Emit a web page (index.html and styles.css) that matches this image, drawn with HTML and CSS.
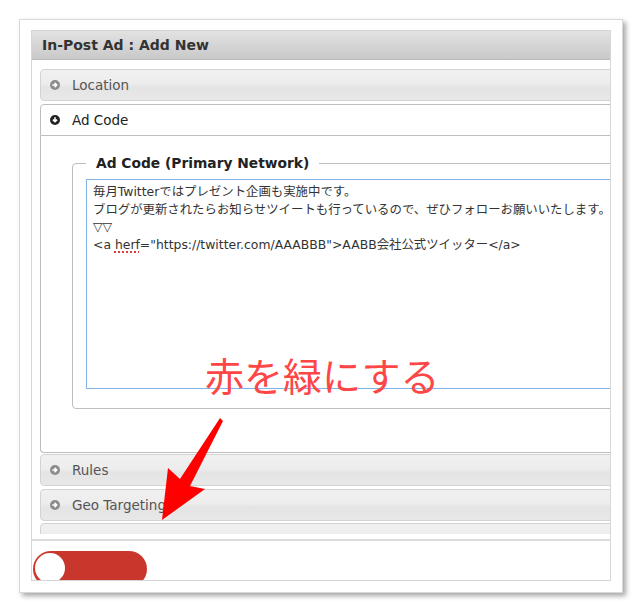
FILE: index.html
```html
<!DOCTYPE html>
<html lang="ja">
<head>
<meta charset="utf-8">
<title>In-Post Ad : Add New</title>
<link rel="stylesheet" href="styles.css">
</head>
<body>
  <div class="card">
    <div class="panel">
      <div class="panel-head">In-Post Ad : Add New</div>
      <div class="panel-body">
        <div class="accordion">
          <div class="acc-head">
            <svg class="acc-icon" viewBox="0 0 10 10"><circle cx="5" cy="5" r="5" fill="#8c8c8c"/><path d="M2.3 5h4M4.6 2.9 6.7 5 4.6 7.1" fill="none" stroke="#fff" stroke-width="1.6"/></svg>
            <span>Location</span>
          </div>
          <div class="acc-head is-open">
            <svg class="acc-icon" viewBox="0 0 10 10"><circle cx="5" cy="5" r="5" fill="#222"/><path d="M5 2.3v4M2.9 4.6 5 6.7 7.1 4.6" fill="none" stroke="#fff" stroke-width="1.6"/></svg>
            <span>Ad Code</span>
          </div>
          <div class="acc-content">
            <fieldset class="code-set">
              <legend>Ad Code (Primary Network)</legend>
              <div class="code-box">毎月Twitterではプレゼント企画も実施中です。
ブログが更新されたらお知らせツイートも行っているので、ぜひフォローお願いいたします。
▽▽
&lt;a <span class="typo">herf</span>="https://twitter.com/AAABBB"&gt;AABB会社公式ツイッター&lt;/a&gt;</div>
            </fieldset>
          </div>
          <div class="acc-head after-open">
            <svg class="acc-icon" viewBox="0 0 10 10"><circle cx="5" cy="5" r="5" fill="#8c8c8c"/><path d="M2.3 5h4M4.6 2.9 6.7 5 4.6 7.1" fill="none" stroke="#fff" stroke-width="1.6"/></svg>
            <span>Rules</span>
          </div>
          <div class="acc-head">
            <svg class="acc-icon" viewBox="0 0 10 10"><circle cx="5" cy="5" r="5" fill="#8c8c8c"/><path d="M2.3 5h4M4.6 2.9 6.7 5 4.6 7.1" fill="none" stroke="#fff" stroke-width="1.6"/></svg>
            <span>Geo Targeting</span>
          </div>
          <div class="acc-head tight"></div>
        </div>
      </div>
      <div class="panel-foot">
        <span class="switch"><span class="knob"></span></span>
      </div>
    </div>
  </div>

  <div class="note">赤を緑にする</div>
  <svg class="pointer" width="642" height="612" viewBox="0 0 642 612">
    <polygon points="220,418 223,421 190,486 205,489 162,520 168,468 180,479" fill="#ff0000"/>
  </svg>
</body>
</html>
```

FILE: styles.css
```css
* {
  box-sizing: border-box;
}

html,
body {
  margin: 0;
}

body {
  width: 642px;
  height: 612px;
  padding: 19px 0 0 19px;
  position: relative;
  overflow: hidden;
  background: #fff;
  font-family: "DejaVu Sans", sans-serif;
}

/* outer frame */
.card {
  width: 604px;
  height: 574px;
  padding: 10px 11px 11px 11px;
  background: #fff;
  border: 1px solid #d8d8d8;
  box-shadow: 3px 3px 5px rgba(0, 0, 0, 0.35);
}

.panel {
  width: 580px;
  height: 551px;
  border: 1px solid #d6d6d6;
  overflow: hidden;
  display: flex;
  flex-direction: column;
}

.panel-head {
  flex: none;
  height: 29px;
  padding-left: 10px;
  border-bottom: 1px solid #b9b9b9;
  background: linear-gradient(#e2e2e2, #c9c9c9);
  color: #333;
  font-weight: bold;
  font-size: 14px;
  line-height: 28px;
}

.panel-body {
  flex: none;
  height: 474px;
  overflow: hidden;
  padding: 9px 0 0 8px;
}

.accordion {
  width: 630px;
}

/* accordion headers */
.acc-head {
  height: 32px;
  margin-top: 3px;
  padding-left: 9px;
  display: flex;
  align-items: center;
  gap: 12px;
  border: 1px solid #d3d3d3;
  border-radius: 4px;
  background: linear-gradient(#f0f0f0 0%, #ededed 45%, #e4e4e4 58%, #e8e8e8 100%);
  color: #555;
  font-size: 13.5px;
}

.acc-head:first-child {
  margin-top: 0;
}

.acc-head.after-open {
  margin-top: 1px;
}

.acc-head.tight {
  margin-top: 2px;
}

.acc-head.is-open {
  background: #fff;
  border-color: #bdbdbd;
  border-radius: 4px 4px 0 0;
  color: #222;
}

.acc-icon {
  width: 10px;
  height: 10px;
  flex: none;
}

.acc-content {
  padding: 19px 0 43px 31px;
  border: 1px solid #bdbdbd;
  border-top: 0;
  border-radius: 0 0 4px 4px;
  background: #fff;
}

.code-set {
  margin: 0;
  min-width: 0;
  padding: 7px 0 19px 13px;
  border: 1px solid #bdbdbd;
  border-radius: 4px;
}

.code-set legend {
  padding: 0 10px;
  color: #222;
  font-weight: bold;
  font-size: 13.8px;
  line-height: 17px;
}

.code-box {
  width: 560px;
  height: 210px;
  padding: 3px 6px 1px;
  border: 1px solid #7fb2e5;
  background: #fff;
  color: #333;
  font-family: "DejaVu Sans", "Noto Sans CJK JP", sans-serif;
  font-size: 12.4px;
  line-height: 17.7px;
  white-space: pre;
}

.typo {
  text-decoration: underline dotted #e23b3b;
  text-decoration-thickness: 2px;
  text-underline-offset: 2px;
}

/* footer with the on/off switch */
.panel-foot {
  flex: 1;
  margin-top: 5px;
  padding: 10px 0 0 1px;
  border-top: 2px solid #dcdcdc;
}

.switch {
  display: block;
  width: 114px;
  height: 36px;
  padding: 2px;
  border-radius: 18px;
  background: #c9372c;
}

.knob {
  display: block;
  width: 30px;
  height: 30px;
  border-radius: 50%;
  background: #fff;
}

/* annotation layer */
.note {
  position: absolute;
  left: 205px;
  top: 355px;
  color: #fe4646;
  font-family: "Noto Sans CJK JP", sans-serif;
  font-size: 39px;
  line-height: 1;
  white-space: nowrap;
}

.pointer {
  position: absolute;
  left: 0;
  top: 0;
  pointer-events: none;
}
```
